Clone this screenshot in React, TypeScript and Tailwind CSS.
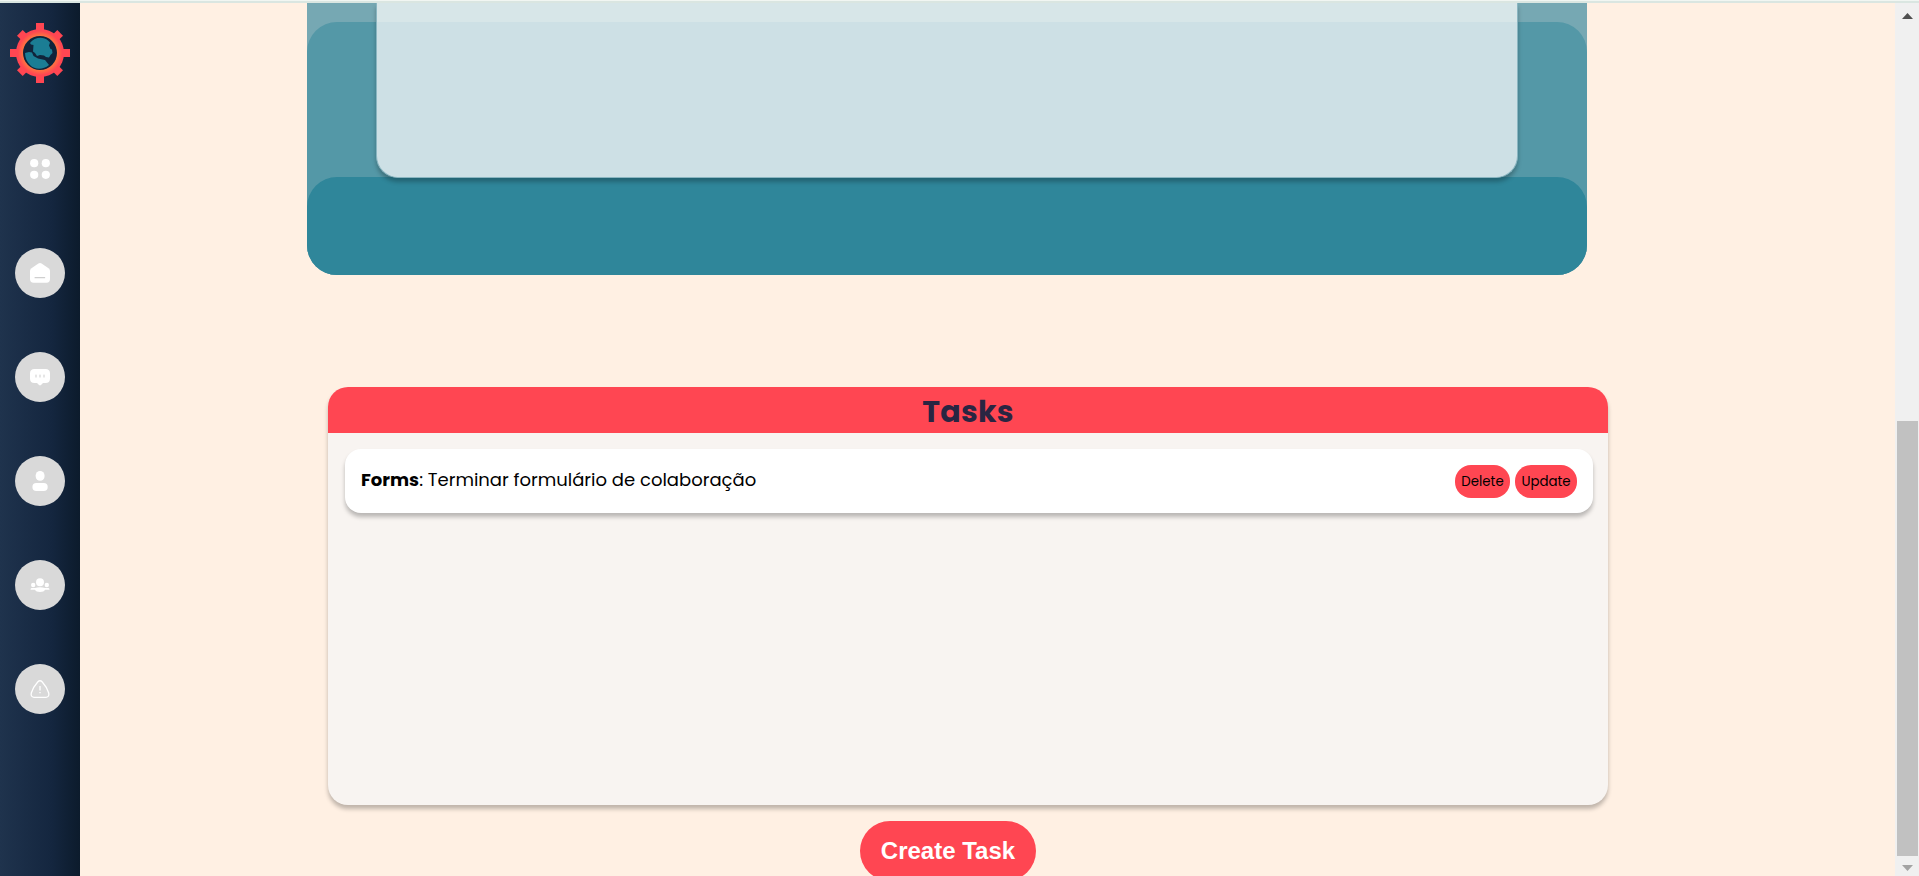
import type { ReactNode } from "react";

const teeth = [0, 45, 90, 135, 180, 225, 270, 315];

function Logo() {
  return (
    <svg viewBox="-30 -30 60 60" className="size-[60px] shrink-0">
      <defs>
        <radialGradient id="ring" cx="0" cy="0" r="24" gradientUnits="userSpaceOnUse">
          <stop offset="0.68" stopColor="#ff7a3e" />
          <stop offset="0.92" stopColor="#ff4652" />
        </radialGradient>
      </defs>
      {teeth.map((angle) => (
        <rect key={angle} x="-4" y={angle % 90 ? -28.5 : -30} width="8" height="10" fill="#ff4652" transform={`rotate(${angle})`} />
      ))}
      <circle r="24" fill="url(#ring)" />
      <circle r="17" fill="#10243b" />
      <path
        d="M-10 -10 C-6 -15.500 3 -17 8 -12.500 L10 -10.500 L9 -7.500 L10.500 -4 L12 -3.500 L12.500 0 L10.500 2 L9 4.500 L6 4 L4 2.500 L0 2 L-3 3 L-5 0 L-7 -1.500 L-6.500 -8 L-9 -8.500 Z"
        fill="#1b7d94"
      />
      <path d="M-15 0 L-11 -1 L-8 -0.500 L-6.500 3 L-2 5.500 L5 7 L9 12 C3 17 -5 17 -10 12 C-13 9 -15 5 -15 0 Z" fill="#1b7d94" />
    </svg>
  );
}

function NavButton({ label, children }: { label: string; children: ReactNode }) {
  return (
    <button aria-label={label} className="flex size-[50px] shrink-0 items-center justify-center rounded-full bg-[#d9d9d9]">
      <svg viewBox="0 0 20 20" className="size-5" fill="white">
        {children}
      </svg>
    </button>
  );
}

function Sidebar() {
  return (
    <aside className="flex w-20 shrink-0 flex-col items-center bg-linear-to-r from-[#1f334d] via-[#14263f] via-65% to-[#0c1b2c] pt-5">
      <Logo />
      <nav className="mt-[61px] flex flex-col gap-[54px]">
        <NavButton label="Dashboard">
          <circle cx="4.200" cy="4.200" r="4.100" />
          <circle cx="15.800" cy="4.200" r="4.100" />
          <circle cx="4.200" cy="15.800" r="4.100" />
          <circle cx="15.800" cy="15.800" r="4.100" />
        </NavButton>
        <NavButton label="Home">
          <path d="M8.400 0.500 Q10 -0.500 11.600 0.500 L18.500 5.200 Q20 6.300 20 8 V16 Q20 19.700 16.500 19.700 H3.500 Q0 19.700 0 16 V8 Q0 6.300 1.500 5.200 Z" />
          <rect x="4.500" y="14" width="10.700" height="1.200" rx="0.500" fill="#cfcfcf" />
        </NavButton>
        <NavButton label="Messages">
          <path d="M4.500 2 H15.500 Q20 2 20 6.500 V11.500 Q20 16 15.500 16 H13 L11 18 Q10 18.800 9 18 L7 16 H4.500 Q0 16 0 11.500 V6.500 Q0 2 4.500 2 Z" />
          <rect x="5.400" y="7.500" width="1.200" height="3" rx="0.500" fill="#d5d5d5" />
          <rect x="9.400" y="7.500" width="1.200" height="3" rx="0.500" fill="#d5d5d5" />
          <rect x="13.400" y="7.500" width="1.200" height="3" rx="0.500" fill="#d5d5d5" />
        </NavButton>
        <NavButton label="Profile">
          <rect x="5.700" y="0" width="8.800" height="9.800" rx="4.300" />
          <rect x="2.400" y="12" width="15.300" height="8" rx="4" />
        </NavButton>
        <NavButton label="Team">
          <circle cx="10" cy="7.200" r="4" />
          <circle cx="3.200" cy="10" r="2.200" />
          <circle cx="16.800" cy="10" r="2.200" />
          <path d="M1.500 13 H5 Q10 11.400 15 13 H18.500 Q19.500 13 19.500 14.800 H15 Q14 17 10 17 Q6 17 5 14.800 H0.500 Q0.500 13 1.500 13 Z" />
        </NavButton>
        <NavButton label="Alerts">
          <path
            d="M7.700 3 Q10 0.500 12.300 3 C15 6 17.500 10 18.700 14 Q19.600 17.800 16 18.300 Q10 18.300 4 18.300 Q0.400 17.800 1.300 14 C2.500 10 5 6 7.700 3 Z"
            fill="none"
            stroke="white"
            strokeWidth="1.300"
          />
          <path d="M10 7 V11.500 M10 13 V14.300" stroke="white" strokeWidth="1.300" />
        </NavButton>
      </nav>
    </aside>
  );
}

function BoardPanel() {
  return (
    <section className="ml-[227px] grid h-[272px] w-[1280px] shrink-0 overflow-hidden rounded-b-[30px] bg-[#76a8b3]">
      <div className="col-start-1 row-start-1 mt-[19px] rounded-t-[30px] bg-[#5498a7]" />
      <div className="col-start-1 row-start-1 mt-[174px] rounded-t-[30px] bg-[#2f869a]" />
      <div className="z-10 col-start-1 row-start-1 mx-[69px] h-[175px] overflow-hidden rounded-b-[22px] border border-t-0 border-[#8ab6c1] bg-[#cde0e5] shadow-[0_4px_4px_rgba(0,0,0,0.25)]">
        <div className="h-[19px] bg-[#d7e6e8]" />
      </div>
    </section>
  );
}

function TaskButton({ width, children }: { width: string; children: ReactNode }) {
  return (
    <button className={`${width} h-[33px] rounded-[16px] bg-[#ff4652] text-[13.333px] font-normal whitespace-nowrap text-black`}>
      {children}
    </button>
  );
}

function TasksCard() {
  return (
    <section className="mt-28 ml-[248px] h-[418px] w-[1280px] shrink-0 rounded-[20px] bg-[#f8f4f1] shadow-[0_4px_4px_rgba(0,0,0,0.25)]">
      <h2 className="flex h-[46px] items-center justify-center rounded-t-[20px] bg-[#ff4652] pt-[3px] text-[30px] font-bold tracking-[0.3px] text-[#2a2542]">
        <span>Tasks</span>
      </h2>
      <div className="mt-4 mr-[15px] ml-[17px] flex h-16 items-center rounded-[16px] bg-white pr-4 pl-4 shadow-[0_4px_4px_rgba(0,0,0,0.25)]">
        <p className="-mt-[3px] flex-1 text-[18px] text-black">
          <strong className="font-bold">Forms</strong>: Terminar formulário de colaboração
        </p>
        <div className="flex gap-[5px] pt-px">
          <TaskButton width="w-[55px]">Delete</TaskButton>
          <TaskButton width="w-[62px]">Update</TaskButton>
        </div>
      </div>
    </section>
  );
}

function Scrollbar() {
  return (
    <div className="flex w-6 shrink-0 flex-col items-center bg-[#f0f0f0]">
      <svg viewBox="0 0 11 6" className="mt-[10px] ml-px h-[6px] w-[11px]">
        <path d="M0 6 L5.500 0 L11 6 Z" fill="#505050" />
      </svg>
      <div className="mt-[402px] h-[435px] w-[21px] bg-[#c1c1c1]" />
      <svg viewBox="0 0 11 6" className="mt-[9px] ml-px h-[6px] w-[11px]">
        <path d="M0 0 H11 L5.500 6 Z" fill="#a3a3a3" />
      </svg>
    </div>
  );
}

export default function App() {
  return (
    <div className="flex h-[876px] w-[1919px] flex-col overflow-hidden bg-[#fff0e3] font-[Poppins,Inter,sans-serif] [font-feature-settings:'cv11']">
      <div className="h-[3px] shrink-0 border-t border-[#f1f6f2] bg-[#dae6e1]" />
      <div className="flex min-h-0 flex-1">
        <Sidebar />
        <main className="flex min-w-0 flex-1 flex-col overflow-hidden">
          <BoardPanel />
          <TasksCard />
          <button className="mt-4 ml-[780px] h-[60px] w-44 shrink-0 rounded-full bg-[#ff4652] font-['Liberation_Sans',Arial,sans-serif] text-[24px] font-bold text-white">
            Create Task
          </button>
        </main>
        <Scrollbar />
      </div>
    </div>
  );
}
